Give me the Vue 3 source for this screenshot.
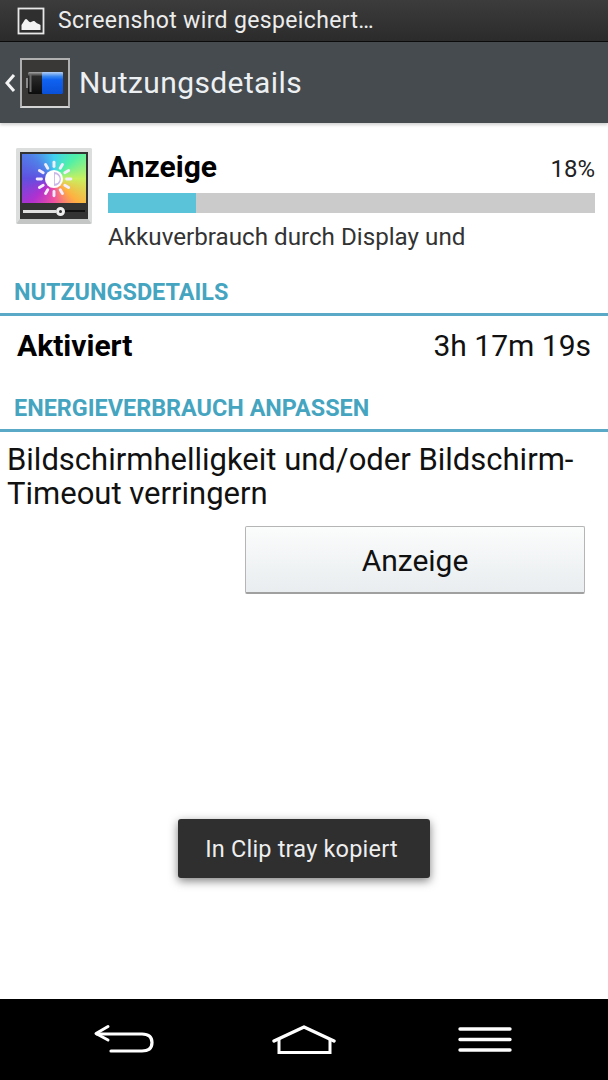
<template>
  <div class="phone">
    <div class="status-bar">
      <svg class="status-icon" width="28" height="28" viewBox="0 0 28 28">
        <rect x="1.500" y="1.500" width="25" height="25" fill="#2f2f2f" stroke="#e8e8e8" stroke-width="1.800" />
        <path d="M4.500 23V18L8 12.500C9 11.500 10 12 11 13.500C12.500 15.500 13.500 15.500 15 14.500C16.500 13.500 18 14 19 15.500C20 16.500 22 17 23.500 18V23Z" fill="#f2f2f2" />
      </svg>
      <span class="status-text">Screenshot wird gespeichert…</span>
    </div>

    <div class="action-bar">
      <svg class="back-chevron" width="12" height="22" viewBox="0 0 12 22">
        <path d="M10 3L3 11L10 19" fill="none" stroke="#f4f4f4" stroke-width="3" />
      </svg>
      <div class="battery-icon">
        <svg width="38" height="24" viewBox="0 0 38 24">
          <defs>
            <linearGradient id="charge" x1="0" y1="0" x2="0" y2="1">
              <stop offset="0" stop-color="#b4d0f6" />
              <stop offset="0.2" stop-color="#3a86f0" />
              <stop offset="0.35" stop-color="#0f62f0" />
              <stop offset="1" stop-color="#0a50d8" />
            </linearGradient>
            <linearGradient id="shell" x1="0" y1="0" x2="0" y2="1">
              <stop offset="0" stop-color="#a8a8a8" />
              <stop offset="0.2" stop-color="#2a2a2a" />
              <stop offset="1" stop-color="#0c0c0c" />
            </linearGradient>
          </defs>
          <rect x="0" y="7" width="2" height="10" fill="#8a8a8a" />
          <rect x="2" y="1" width="35" height="22" rx="1.500" fill="url(#shell)" />
          <rect x="3.500" y="3" width="2" height="18" fill="#6a6a6a" />
          <rect x="16" y="1" width="21" height="22" rx="1" fill="url(#charge)" />
        </svg>
      </div>
      <span class="action-title">Nutzungsdetails</span>
    </div>

    <main class="content">
      <div class="summary">
        <div class="display-icon">
          <div class="spectrum">
            <svg width="38" height="38" viewBox="0 0 44 44">
              <g stroke="#f4ecff" stroke-width="3.400" stroke-linecap="round">
                <line v-for="ray in rays" :key="ray" x1="22" y1="2.500" x2="22" y2="7.500" :transform="`rotate(${ray} 22 22)`" />
              </g>
              <circle cx="22" cy="22" r="10.500" fill="#fff" />
              <path d="M22 14A8 8 0 0 1 22 30Z" fill="#c9b8e8" />
              <path d="M23 16.500A5.500 5.500 0 0 1 23 27.500Z" fill="#fff" />
            </svg>
          </div>
          <div class="slider">
            <span class="slider-on"></span>
            <span class="slider-knob"></span>
            <span class="slider-off"></span>
          </div>
        </div>
        <div class="summary-body">
          <div class="summary-head">
            <span class="summary-title">Anzeige</span>
            <span class="summary-percent">18%</span>
          </div>
          <div class="progress">
            <div class="progress-fill" :style="{ width: percent + '%' }"></div>
          </div>
          <div class="summary-text">Akkuverbrauch durch Display und</div>
        </div>
      </div>

      <div class="section-title first">NUTZUNGSDETAILS</div>
      <div class="usage-row">
        <span class="usage-label">Aktiviert</span>
        <span class="usage-value">3h 17m 19s</span>
      </div>

      <div class="section-title">ENERGIEVERBRAUCH ANPASSEN</div>
      <p class="hint">Bildschirmhelligkeit und/oder Bildschirm-<br />Timeout verringern</p>
      <div class="button-row">
        <button class="display-button">Anzeige</button>
      </div>

      <div class="toast">In Clip tray kopiert</div>
    </main>

    <nav class="nav-bar">
      <svg width="64" height="34" viewBox="0 0 64 34">
        <path d="M16 3.500L4 10.500L16 17" fill="none" stroke="#fff" stroke-width="3" stroke-linecap="round" stroke-linejoin="round" />
        <path d="M5 11H50C56 11 60 13 60 19.500C60 26 56 28 50 28H19" fill="none" stroke="#fff" stroke-width="3.200" stroke-linecap="round" />
      </svg>
      <svg class="home-icon" width="64" height="30" viewBox="0 0 64 30">
        <path d="M2 16L32 2L62 16" fill="none" stroke="#fff" stroke-width="3.400" stroke-linecap="round" stroke-linejoin="round" />
        <path d="M7 14V27.500H58V14" fill="none" stroke="#fff" stroke-width="3" />
      </svg>
      <svg width="54" height="28" viewBox="0 0 54 28">
        <path d="M2 3H52M2 13.500H52M2 24H52" fill="none" stroke="#fff" stroke-width="3.400" stroke-linecap="round" />
      </svg>
    </nav>
  </div>
</template>

<script setup>
const percent = 18
const rays = [0, 30, 60, 90, 120, 150, 180, 210, 240, 270, 300, 330]
</script>

<style>
html,
body {
  margin: 0;
  background: #fff;
}
</style>

<style scoped>
.phone {
  width: 608px;
  height: 1080px;
  display: flex;
  flex-direction: column;
  overflow: hidden;
  font-family: Roboto, "Liberation Sans", sans-serif;
  background: #fff;
}

.status-bar {
  height: 42px;
  flex: none;
  box-sizing: border-box;
  display: flex;
  align-items: center;
  padding-left: 17px;
  background: linear-gradient(#3c3c3c, #2b2b2b);
  border-bottom: 1px solid #0c0c0c;
}

.status-icon {
  margin-right: 13px;
}

.status-text {
  font-size: 23px;
  color: #ececec;
  letter-spacing: 0.35px;
}

.action-bar {
  height: 81px;
  flex: none;
  box-sizing: border-box;
  display: flex;
  align-items: center;
  padding-left: 4px;
  background: #464b50;
  box-shadow: 0 2px 3px rgba(0, 0, 0, 0.18);
  position: relative;
  z-index: 1;
}

.back-chevron {
  margin-right: 4px;
}

.battery-icon {
  width: 46px;
  height: 46px;
  display: flex;
  align-items: center;
  justify-content: center;
  background: #3a3836;
  border: 2px solid #b0b0b0;
  border-bottom-color: #d4d4d4;
}

.action-title {
  margin-left: 9px;
  font-size: 30px;
  color: #edf0f2;
  letter-spacing: 0.4px;
}

.content {
  flex: 1;
  position: relative;
}

.summary {
  display: flex;
  padding: 25px 13px 0 16px;
}

.display-icon {
  width: 76px;
  height: 76px;
  flex: none;
  box-sizing: border-box;
  border: 4px solid #dcdede;
  border-bottom: 5px solid #c4c6c6;
  border-radius: 2px;
  background: #333;
  display: flex;
  flex-direction: column;
  margin-right: 16px;
}

.spectrum {
  height: 49px;
  margin: 2px 2px 0;
  display: flex;
  align-items: center;
  justify-content: center;
  background: conic-gradient(#40d0f0, #50f0a8 45deg, #c8f060 90deg, #ffb040 135deg, #f050a0 180deg, #b030d0 225deg, #6050e0 270deg, #5080e8 315deg, #40d0f0);
}

.slider {
  flex: 1;
  display: flex;
  align-items: center;
  padding: 0 3px;
}

.slider-on {
  width: 33px;
  height: 3px;
  background: #e0e0e0;
}

.slider-knob {
  width: 3px;
  height: 3px;
  border: 3px solid #eee;
  border-radius: 50%;
  background: #333;
}

.slider-off {
  flex: 1;
  height: 2px;
  background: #111;
}

.summary-body {
  flex: 1;
}

.summary-head {
  display: flex;
  justify-content: space-between;
  align-items: baseline;
  height: 45px;
  line-height: 38px;
}

.summary-title {
  font-size: 30px;
  font-weight: 700;
  color: #000;
}

.summary-percent {
  font-size: 24px;
  color: #222;
}

.progress {
  height: 20px;
  background: #cbcbcb;
}

.progress-fill {
  height: 100%;
  background: #5ac3da;
}

.summary-text {
  margin-top: 10px;
  font-size: 24.200px;
  line-height: 28px;
  color: #333;
}

.section-title {
  height: 36px;
  box-sizing: border-box;
  padding-left: 14px;
  font-size: 23.400px;
  line-height: 25px;
  font-weight: 700;
  color: #45a5c0;
  border-bottom: 3px solid #5aa9c6;
  margin-top: 22px;
}

.section-title.first {
  margin-top: 29px;
}

.usage-row {
  display: flex;
  justify-content: space-between;
  align-items: center;
  height: 58px;
  padding: 0 17px;
  font-size: 30px;
  color: #111;
}

.usage-label {
  font-weight: 700;
  color: #000;
}

.hint {
  margin: 11px 0 0;
  padding-left: 7px;
  font-size: 31px;
  line-height: 34px;
  color: #111;
}

.button-row {
  display: flex;
  justify-content: flex-end;
  margin-top: 15px;
  padding-right: 23px;
}

.display-button {
  width: 340px;
  height: 68px;
  padding-top: 3px;
  border: 1px solid #b5b5b5;
  border-bottom: 2px solid #a0a0a0;
  border-radius: 2px;
  background: linear-gradient(#fbfcfc, #e9edef);
  font-family: inherit;
  font-size: 30px;
  color: #111;
}

.toast {
  position: absolute;
  left: 178px;
  top: 696px;
  width: 252px;
  height: 59px;
  box-sizing: border-box;
  padding-right: 5px;
  display: flex;
  align-items: center;
  justify-content: center;
  border-radius: 3px;
  background: #2f2f2f;
  color: #eee;
  font-size: 23.500px;
  letter-spacing: 0.2px;
  box-shadow: 0 3px 10px rgba(0, 0, 0, 0.5);
}

.nav-bar {
  height: 81px;
  flex: none;
  box-sizing: border-box;
  background: #000;
  display: flex;
  align-items: center;
  justify-content: space-between;
  padding: 0 96px 0 92px;
}

.home-icon {
  margin-right: 6px;
}
</style>
